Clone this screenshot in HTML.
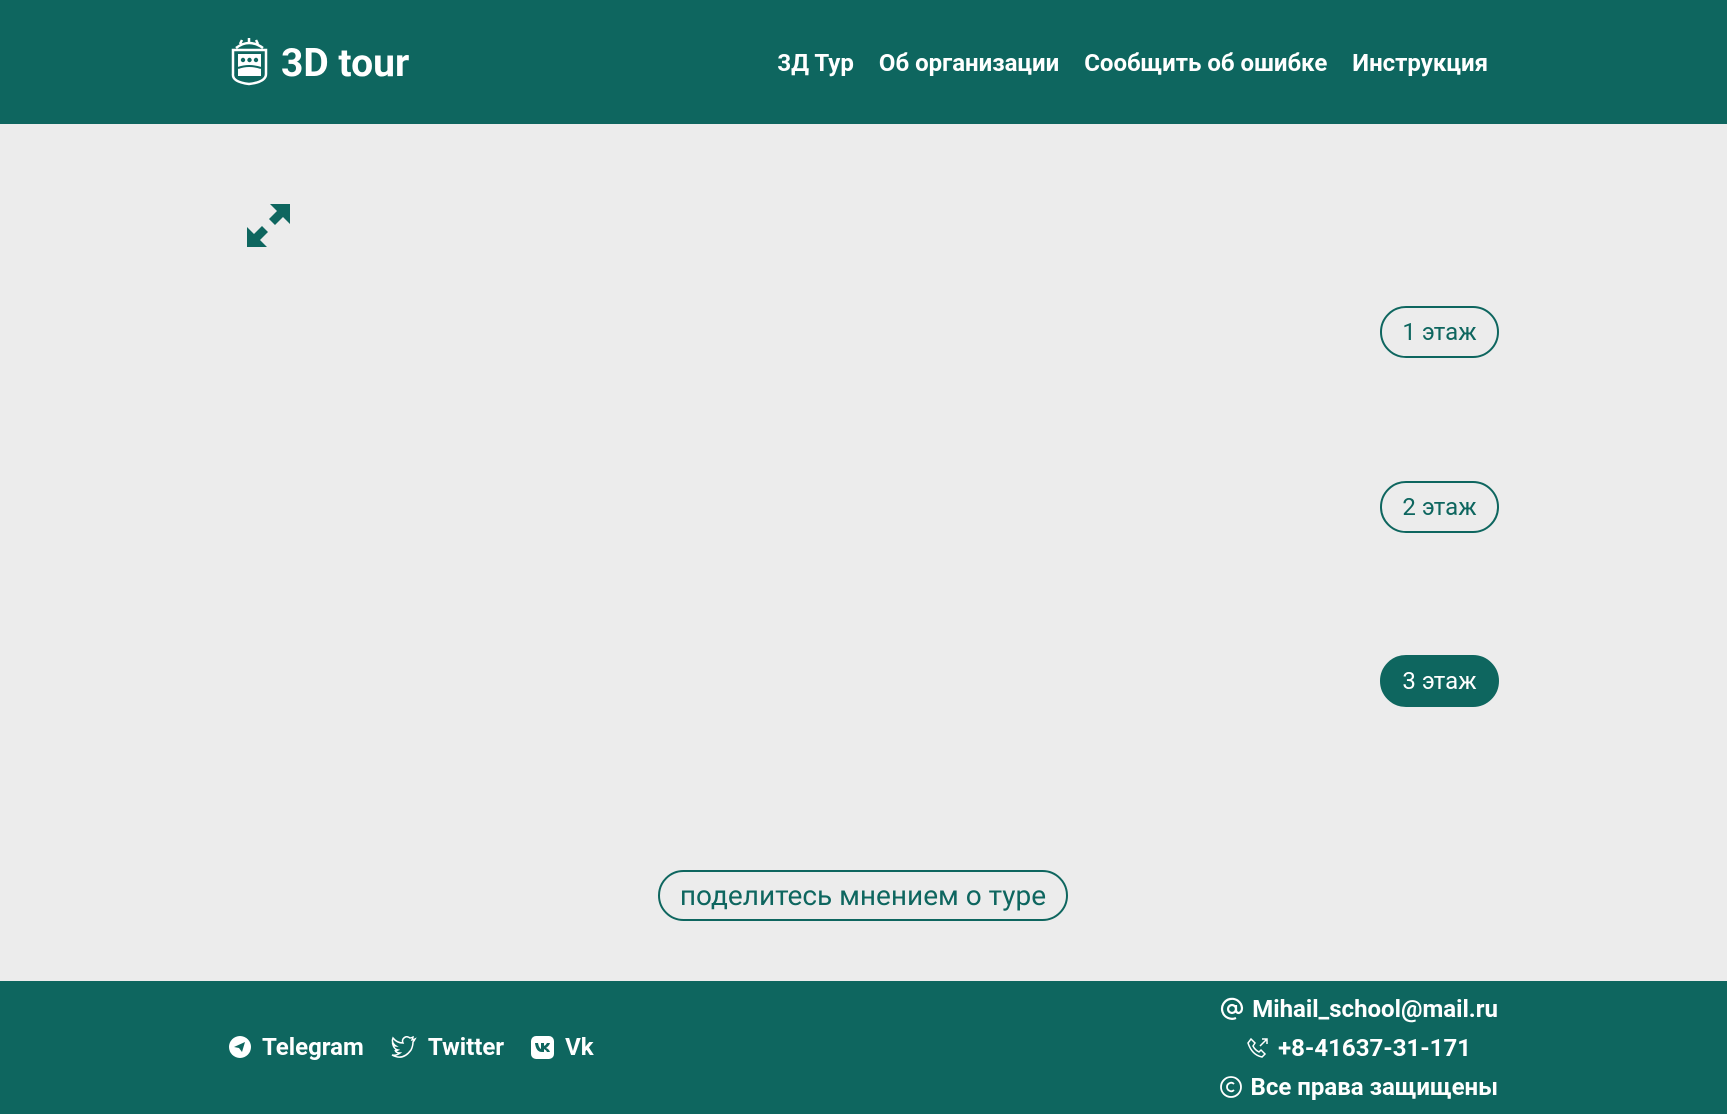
<!DOCTYPE html>
<html><head><meta charset="utf-8"><style>
*{margin:0;padding:0;box-sizing:border-box}
body{width:1727px;height:1114px;background:#ececec;font-family:"Roboto","Liberation Sans",sans-serif;position:relative;overflow:hidden;color:#fff}
.hdr{position:absolute;left:0;top:0;width:1727px;height:124px;background:#0e665f}
.ftr{position:absolute;left:0;top:981px;width:1727px;height:133px;background:#0e665f}
.abs{position:absolute;white-space:nowrap}
.nav{position:absolute;top:49px;right:239px;font-size:24px;font-weight:bold;display:flex;gap:25px}
.btn{position:absolute;border:2px solid #0e665f;border-radius:30px;color:#0e665f;font-size:24px;display:flex;align-items:center;justify-content:center}
.f{font-size:24px;font-weight:bold;display:flex;align-items:center;gap:8px}
</style></head><body>
<div class="hdr">
<svg class="abs" style="left:228px;top:38px" width="43" height="48" viewBox="0 0 43 48" fill="none" stroke="#fff" stroke-width="2.5">
<path d="M8 10 Q21 0 35 10" /><path d="M12 6 L14 2 M21 4 L21 0 M30 6 L28 2"/>
<path d="M5 12 L38 12 L38 36 Q38 44 21 46 Q4 44 5 36 Z"/>
<rect x="10" y="16" width="23" height="22" fill="#fff" stroke="none"/>
<circle cx="15" cy="22" r="2.2" fill="#0e665f" stroke="none"/><circle cx="21.5" cy="22" r="2.2" fill="#0e665f" stroke="none"/><circle cx="28" cy="22" r="2.2" fill="#0e665f" stroke="none"/>
<path d="M10 30 Q21 26 33 30" stroke="#0e665f" stroke-width="2"/>
</svg>
<div class="abs" style="left:281px;top:40px;font-size:39px;font-weight:bold">3D tour</div>
<div class="nav"><span>3Д Тур</span><span>Об организации</span><span>Сообщить об ошибке</span><span>Инструкция</span></div>
</div>
<svg class="abs" style="left:247px;top:204px" width="43" height="43" viewBox="0 0 43 43" fill="#0e665f">
<path d="M23 0 H43 V20 L36 13 L28 21 L22 15 L30 7 Z"/>
<path d="M0 43 V23 L7 30 L15 22 L21 28 L13 36 L20 43 Z"/>
</svg>
<div class="btn" style="left:1380px;top:306px;width:119px;height:52px">1 этаж</div>
<div class="btn" style="left:1380px;top:481px;width:119px;height:52px">2 этаж</div>
<div class="btn" style="left:1380px;top:655px;width:119px;height:52px;background:#0e665f;color:#fff">3 этаж</div>
<div class="btn" style="left:658px;top:870px;width:410px;height:51px;font-size:28px">поделитесь мнением о туре</div>
<div class="ftr">
<div class="abs f" style="left:229px;top:52px;gap:11px">
<svg width="22" height="22" viewBox="0 0 22 22"><circle cx="11" cy="11" r="11" fill="#fff"/><path d="M5 11 L16 6 L13 16 L10 12 Z" fill="#0e665f"/></svg><span>Telegram</span>
<svg style="margin-left:16px" width="26" height="22" viewBox="0 0 26 22" fill="none" stroke="#fff" stroke-width="1.5"><path d="M24 3 Q22 4 21 4 Q22 2 22 1 Q20 2 19 2 Q15 -1 12 3 Q11 5 12 7 Q6 7 2 2 Q0 7 5 10 Q3 10 2 9 Q3 13 7 14 Q5 15 4 14 Q5 17 9 17 Q5 20 1 19 Q12 25 20 14 Q22 10 22 6 Q23 5 24 3 Z"/></svg><span>Twitter</span>
<svg style="margin-left:16px" width="23" height="23" viewBox="0 0 23 23"><rect width="23" height="23" rx="5" fill="#fff"/><path d="M4 7 H7 Q8 12 10 13 V7 H13 V10 Q15 9 16 7 H19 Q18 10 15 12 Q18 13 19 16 H16 Q15 14 13 13 V16 H11 Q5 16 4 7 Z" fill="#0e665f"/></svg><span>Vk</span>
</div>
<div class="abs f" style="right:229px;top:14px"><svg width="24" height="24" viewBox="0 0 24 24" fill="none" stroke="#fff" stroke-width="2.2"><circle cx="12" cy="12" r="4"/><path d="M16 8 V13 Q16 16 19 16 Q22 15 22 11 A10 10 0 1 0 16 21"/></svg><span>Mihail_school@mail.ru</span></div>
<div class="abs f" style="right:256px;top:53px"><svg width="24" height="24" viewBox="0 0 24 24" fill="none" stroke="#fff" stroke-width="1.5"><path d="M5 3 L9 7 L7 10 Q9 14 13 16 L15 14 L19 18 L16 21 Q6 19 2 7 Z"/><path d="M14 10 L21 3 M16 3 H21 V8"/></svg><span>+8-41637-31-171</span></div>
<div class="abs f" style="right:229px;top:92px"><svg width="24" height="24" viewBox="0 0 24 24" fill="none" stroke="#fff" stroke-width="1.8"><circle cx="12" cy="12" r="10"/><path d="M15 9 Q13 7 11 8 Q8 9 8 12 Q8 15 11 16 Q13 17 15 15"/></svg><span>Все права защищены</span></div>
</div>
</body></html>
